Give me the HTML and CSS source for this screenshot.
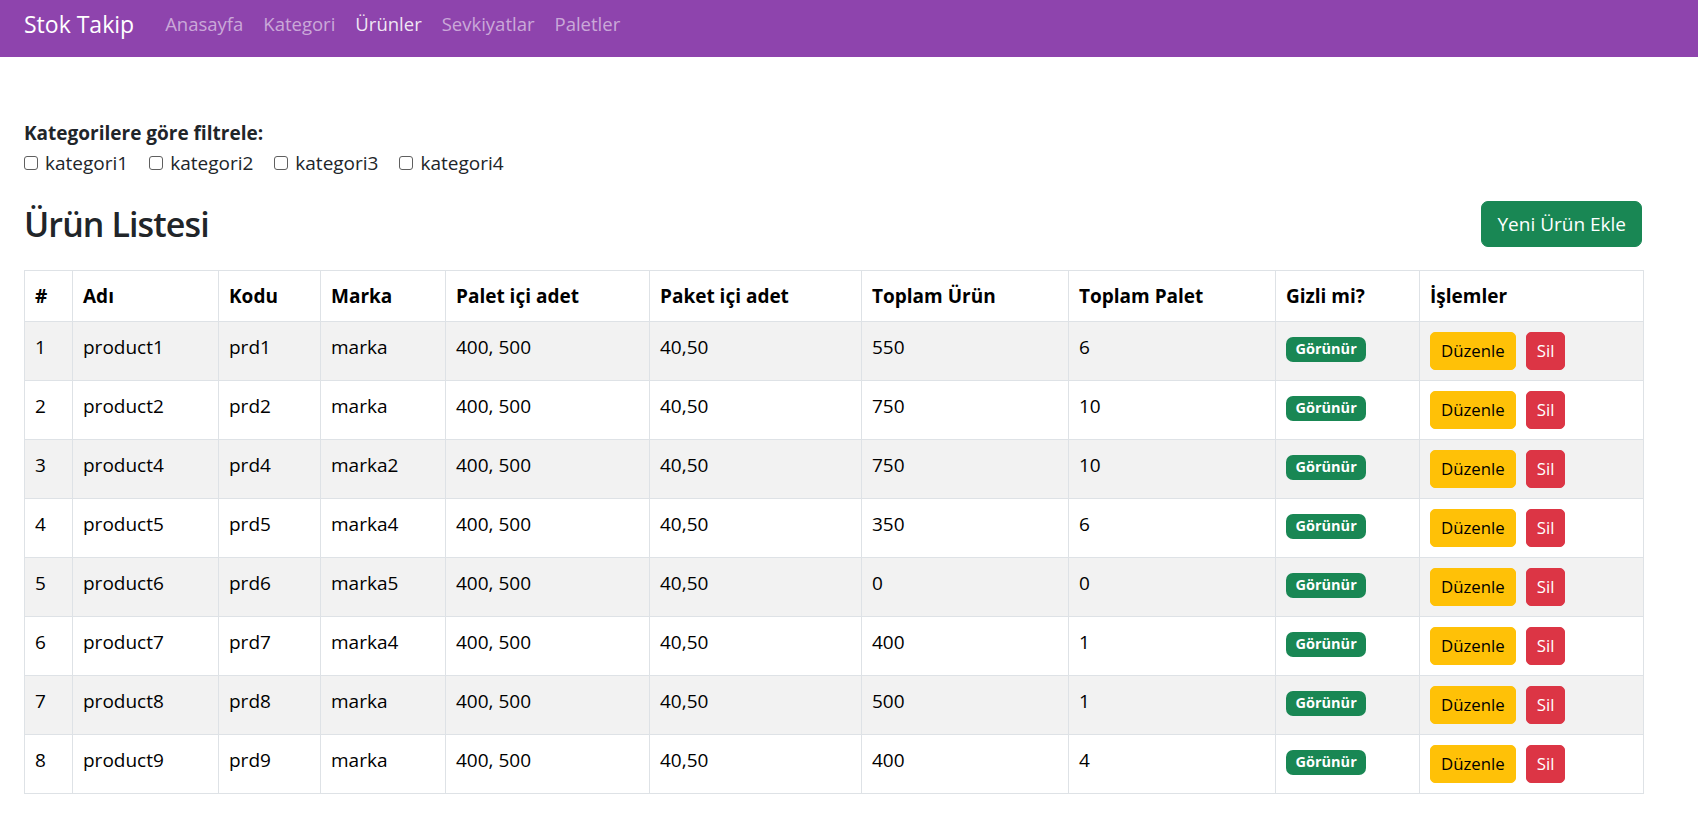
FILE: index.html
```html
<!DOCTYPE html>
<html lang="tr">
<head>
<meta charset="utf-8">
<title>Stok Takip - Ürünler</title>
<link rel="stylesheet" href="styles.css">
</head>
<body>
<nav class="navbar">
  <a class="brand" href="#">Stok Takip</a>
  <ul class="nav">
    <li><a class="nav-link" href="#">Anasayfa</a></li>
    <li><a class="nav-link" href="#">Kategori</a></li>
    <li><a class="nav-link active" href="#">Ürünler</a></li>
    <li><a class="nav-link" href="#">Sevkiyatlar</a></li>
    <li><a class="nav-link" href="#">Paletler</a></li>
  </ul>
</nav>
<main class="container">
  <section class="filter">
    <div class="filter-title">Kategorilere göre filtrele:</div>
    <div class="filter-options">
      <label class="filter-option"><input type="checkbox" class="check"><span>kategori1</span></label>
      <label class="filter-option"><input type="checkbox" class="check"><span>kategori2</span></label>
      <label class="filter-option"><input type="checkbox" class="check"><span>kategori3</span></label>
      <label class="filter-option"><input type="checkbox" class="check"><span>kategori4</span></label>
    </div>
  </section>
  <div class="list-header">
    <h2 class="title">Ürün Listesi</h2>
    <a class="btn btn-success" href="#">Yeni Ürün Ekle</a>
  </div>
  <table class="table">
    <colgroup>
      <col class="c-num"><col class="c-name"><col class="c-code"><col class="c-brand"><col class="c-palet">
      <col class="c-paket"><col class="c-total"><col class="c-tpalet"><col class="c-hidden"><col class="c-actions">
    </colgroup>
    <thead>
      <tr><th>#</th><th>Adı</th><th>Kodu</th><th>Marka</th><th>Palet içi adet</th><th>Paket içi adet</th><th>Toplam Ürün</th><th>Toplam Palet</th><th>Gizli mi?</th><th>İşlemler</th></tr>
    </thead>
    <tbody>
      <tr><td>1</td><td>product1</td><td>prd1</td><td>marka</td><td>400, 500</td><td>40,50</td><td>550</td><td>6</td><td><span class="badge">Görünür</span></td><td><a class="btn-sm btn-warning" href="#">Düzenle</a><a class="btn-sm btn-danger" href="#">Sil</a></td></tr>
      <tr><td>2</td><td>product2</td><td>prd2</td><td>marka</td><td>400, 500</td><td>40,50</td><td>750</td><td>10</td><td><span class="badge">Görünür</span></td><td><a class="btn-sm btn-warning" href="#">Düzenle</a><a class="btn-sm btn-danger" href="#">Sil</a></td></tr>
      <tr><td>3</td><td>product4</td><td>prd4</td><td>marka2</td><td>400, 500</td><td>40,50</td><td>750</td><td>10</td><td><span class="badge">Görünür</span></td><td><a class="btn-sm btn-warning" href="#">Düzenle</a><a class="btn-sm btn-danger" href="#">Sil</a></td></tr>
      <tr><td>4</td><td>product5</td><td>prd5</td><td>marka4</td><td>400, 500</td><td>40,50</td><td>350</td><td>6</td><td><span class="badge">Görünür</span></td><td><a class="btn-sm btn-warning" href="#">Düzenle</a><a class="btn-sm btn-danger" href="#">Sil</a></td></tr>
      <tr><td>5</td><td>product6</td><td>prd6</td><td>marka5</td><td>400, 500</td><td>40,50</td><td>0</td><td>0</td><td><span class="badge">Görünür</span></td><td><a class="btn-sm btn-warning" href="#">Düzenle</a><a class="btn-sm btn-danger" href="#">Sil</a></td></tr>
      <tr><td>6</td><td>product7</td><td>prd7</td><td>marka4</td><td>400, 500</td><td>40,50</td><td>400</td><td>1</td><td><span class="badge">Görünür</span></td><td><a class="btn-sm btn-warning" href="#">Düzenle</a><a class="btn-sm btn-danger" href="#">Sil</a></td></tr>
      <tr><td>7</td><td>product8</td><td>prd8</td><td>marka</td><td>400, 500</td><td>40,50</td><td>500</td><td>1</td><td><span class="badge">Görünür</span></td><td><a class="btn-sm btn-warning" href="#">Düzenle</a><a class="btn-sm btn-danger" href="#">Sil</a></td></tr>
      <tr><td>8</td><td>product9</td><td>prd9</td><td>marka</td><td>400, 500</td><td>40,50</td><td>400</td><td>4</td><td><span class="badge">Görünür</span></td><td><a class="btn-sm btn-warning" href="#">Düzenle</a><a class="btn-sm btn-danger" href="#">Sil</a></td></tr>
    </tbody>
  </table>
</main>
</body>
</html>
```
FILE: styles.css
```css
* { box-sizing: border-box; }
html, body { margin: 0; padding: 0; }
body {
  font-family: "Open Sans", "Noto Sans", "Liberation Sans", sans-serif;
  font-size: 19px;
  line-height: 1.5;
  color: #212529;
  background: #fff;
}
a { text-decoration: none; }

.navbar {
  height: 57px;
  background: #8e44ad;
  display: flex;
  align-items: flex-start;
  padding: 0 24px;
}
.brand {
  font-size: 23px;
  line-height: 48px;
  color: #fff;
  margin-right: 21px;
}
.nav {
  list-style: none;
  margin: 0;
  padding: 0;
  display: flex;
}
.nav-link {
  display: block;
  padding: 0 10px;
  line-height: 48px;
  font-size: 18.5px;
  color: rgba(255, 255, 255, 0.55);
}
.nav-link.active { color: rgba(255, 255, 255, 0.88); }

.container {
  padding: 61px 56px 20px 24px;
}
.filter-title {
  font-weight: 700;
  line-height: 30px;
}
.filter-options {
  display: flex;
  gap: 21px;
  line-height: 30px;
}
.filter-option {
  display: flex;
  align-items: center;
  gap: 7px;
}
.check {
  appearance: none;
  -webkit-appearance: none;
  width: 14px;
  height: 14px;
  margin: 0;
  border: 1.3px solid #5f5f5f;
  border-radius: 3px;
  background: #fff;
}

.list-header {
  margin-top: 22px;
  height: 48px;
  display: flex;
  align-items: center;
  justify-content: space-between;
}
.title {
  margin: 0;
  font-size: 34px;
  font-weight: 600;
  letter-spacing: -0.9px;
  line-height: 1.2;
  color: #212529;
}
.btn {
  display: inline-block;
  padding: 7px 15px;
  font-size: 19px;
  line-height: 30px;
  border: 1px solid transparent;
  border-radius: 7px;
}
.btn-success { background: #198754; border-color: #198754; color: #fff; }

.table {
  margin-top: 22px;
  width: 100%;
  border-collapse: collapse;
  table-layout: fixed;
  color: #000;
}
.table th, .table td {
  border: 1px solid #dee2e6;
  padding: 10px;
  text-align: left;
  vertical-align: top;
  line-height: 30px;
  white-space: nowrap;
}
.table th { font-weight: 700; }
.table tbody tr:nth-child(odd) td { background: #f2f2f2; }

.c-num { width: 48px; }
.c-name { width: 146px; }
.c-code { width: 102px; }
.c-brand { width: 125px; }
.c-palet { width: 204px; }
.c-paket { width: 212px; }
.c-total { width: 207px; }
.c-tpalet { width: 207px; }
.c-hidden { width: 144px; }
.c-actions { width: 224px; }

.badge {
  display: inline-block;
  font-size: 14.5px;
  font-weight: 700;
  line-height: 1;
  padding: 5px 9.5px;
  border-radius: 7px;
  background: #198754;
  color: #fff;
}
.btn-sm {
  display: inline-block;
  font-size: 16.8px;
  line-height: 26px;
  padding: 5px 10px;
  border: 1px solid transparent;
  border-radius: 5px;
}
.btn-warning { background: #ffc107; border-color: #ffc107; color: #000; margin-right: 10px; }
.btn-danger { background: #dc3545; border-color: #dc3545; color: #fff; }
```
